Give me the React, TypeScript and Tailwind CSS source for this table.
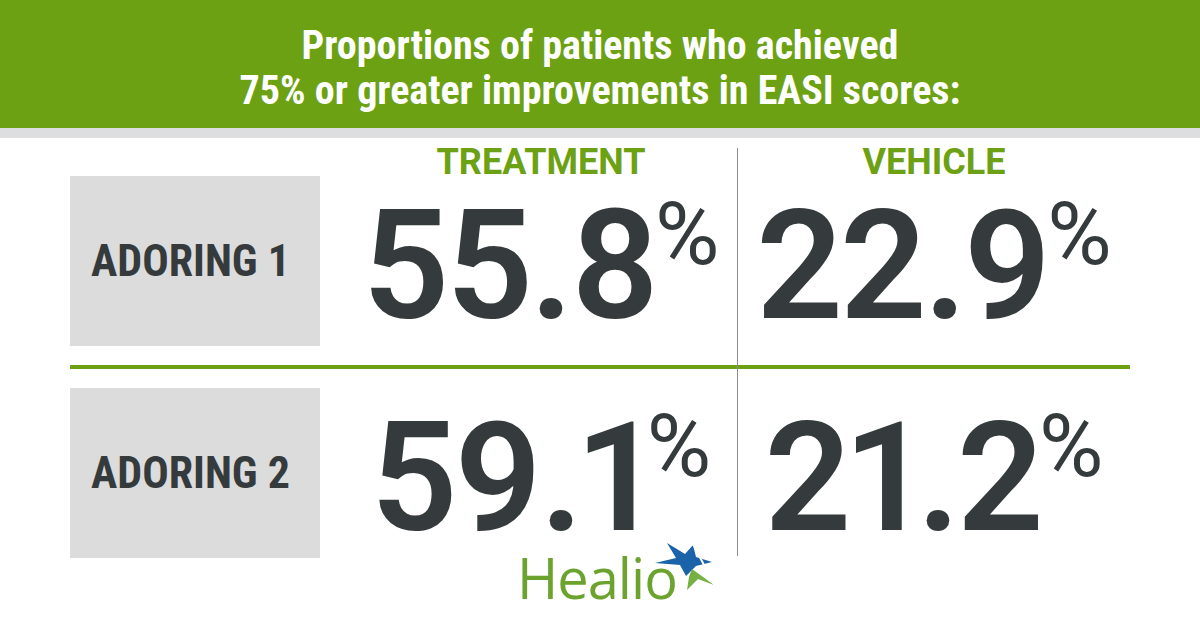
import React from 'react';

const rows = [
  { label: 'ADORING 1', treatment: '55.8', vehicle: '22.9' },
  { label: 'ADORING 2', treatment: '59.1', vehicle: '21.2' },
];

function Stat({ value }: { value: string }) {
  return (
    <div className="flex items-start justify-center pt-[14px] text-[#353b3c]">
      <span className="text-[152px] leading-none font-semibold tracking-[-3px] proportional-nums">{value}</span>
      <span className="ml-[-2px] text-[88px] leading-none font-normal">%</span>
    </div>
  );
}

function HealioLogo() {
  return (
    <div className="relative inline-flex">
      <span className="font-['Open_Sans',sans-serif] text-[56px] leading-[40px] font-normal tracking-[-1px] text-[#6ba32e]">
        Healio
      </span>
      <svg className="absolute left-[135px] top-[-18px]" width="66" height="52" viewBox="0 0 66 52">
        <path d="M15 4 L33 15 L41 6 L44 18 L60 23 L44 27 L34 37 L28 26 L3 24 L24 19 Z" fill="#1b63a9" />
        <path d="M40 30 L62 46 L46 40 L35 51 L37 38 Z" fill="#76b043" />
        <path d="M41 5 L63 47" stroke="#ffffff" strokeWidth="2" />
      </svg>
    </div>
  );
}

export default function App() {
  return (
    <div className="w-[1200px] h-[630px] overflow-hidden bg-white font-['Roboto',sans-serif]">
      <div className="h-[128px] bg-[#6ca113] pt-[23px] text-center text-white text-[40px] leading-[45px] font-bold [font-stretch:75%]">
        <p>Proportions of patients who achieved</p>
        <p>75% or greater improvements in EASI scores:</p>
      </div>
      <div className="h-[10px] bg-[#dddee0]" />

      <div className="px-[70px]">
        <div className="grid h-[38px] grid-cols-[275px_392px_393px]">
          <div />
          <div className="pt-[10px]">
            <p className="h-[28px] text-center text-[36px] leading-[28px] font-bold text-[#6ca113]">TREATMENT</p>
          </div>
          <div className="pt-[10px]">
            <p className="h-[28px] border-l border-[#8c8c8c] text-center text-[36px] leading-[28px] font-bold text-[#6ca113]">
              VEHICLE
            </p>
          </div>
        </div>

        {rows.map((r, i) => (
          <React.Fragment key={r.label}>
            {i > 0 && (
              <div className="grid h-[42px] grid-cols-[275px_392px_393px]">
                <div className="pt-[19px]"><div className="h-[4px] bg-[#6ca113]" /></div>
                <div className="pt-[19px]"><div className="h-[4px] bg-[#6ca113]" /></div>
                <div className="border-l border-[#8c8c8c] pt-[19px]"><div className="h-[4px] bg-[#6ca113]" /></div>
              </div>
            )}
            <div className="grid h-[170px] grid-cols-[275px_392px_393px]">
              <div className="flex w-[250px] items-center bg-[#dcdcdc] pl-[21px]">
                <span className="text-[44px] leading-none font-bold text-[#353b3c] [font-stretch:75%]">{r.label}</span>
              </div>
              <Stat value={r.treatment} />
              <div className={i > 0 ? 'mb-[2px] border-l border-[#8c8c8c]' : 'border-l border-[#8c8c8c]'}>
                <Stat value={r.vehicle} />
              </div>
            </div>
          </React.Fragment>
        ))}

        <div className="-mt-[1px] pl-[447px]">
          <HealioLogo />
        </div>
      </div>
    </div>
  );
}
